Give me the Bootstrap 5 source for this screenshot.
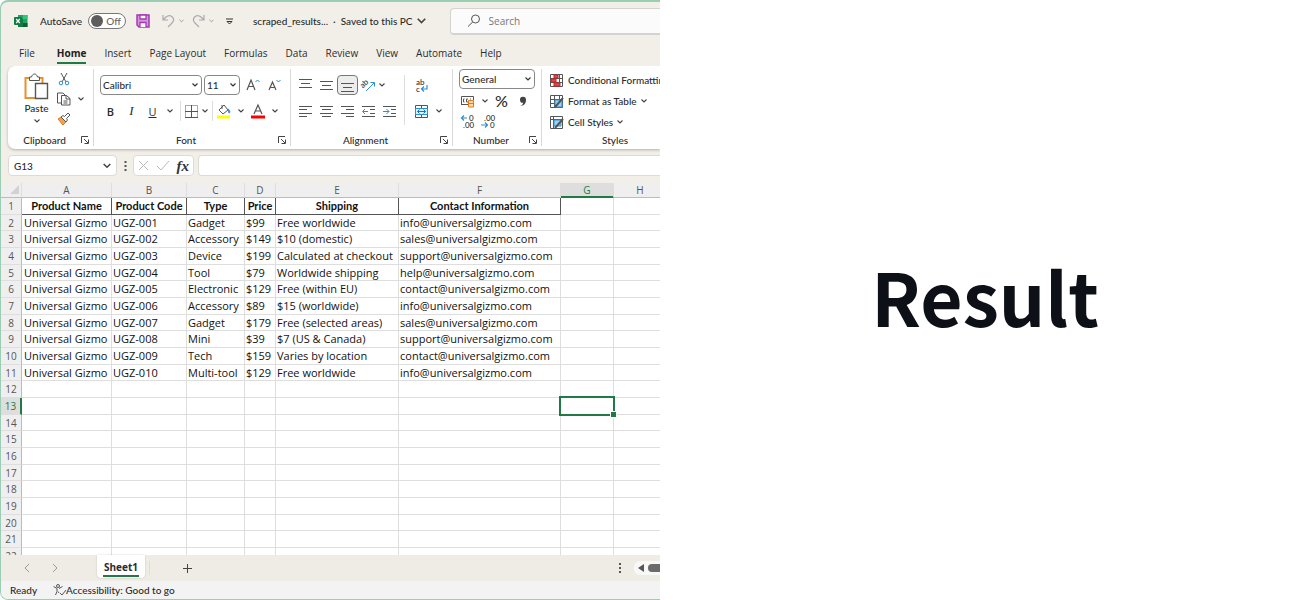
<!DOCTYPE html>
<html lang="en">
<head>
<meta charset="utf-8">
<meta name="viewport" content="width=device-width, initial-scale=1">
<title>scraped_results</title>
<link href="https://cdn.jsdelivr.net/npm/bootstrap@5.3.0/dist/css/bootstrap.min.css" rel="stylesheet">
<script src="https://cdn.jsdelivr.net/npm/bootstrap@5.3.0/dist/js/bootstrap.bundle.min.js"></script>
<style>
:root{--ink:#2b2b2b;--line:#dedede;--green:#1f7a45}
body{background:#fff;color:var(--ink);font:500 10px/16px Lato,"Open Sans",sans-serif}
button,input,select{font:inherit;color:inherit}
button{border:0;background:none;padding:0}
svg{display:block;fill:none;stroke:#555;stroke-width:1;flex:none;overflow:visible}
.icon-defs{position:absolute}
.no-line{stroke:none}
.icon-text{stroke:none;fill:#333;font-size:8px}
.workbook{flex:0 0 50.8%;min-width:0;border:1px solid #9bcdb4;border-width:2px 0 1px 1px;border-radius:8px 0 0 8px;background:#f2efe8;white-space:nowrap}
.workbook>*{flex:none}
.titlebar{height:38px;padding-left:13px}
.autosave{width:38px;height:16px;border:1px solid #777;border-radius:8px;background:#fff;margin:0 10px 0 6px;padding:0 4px 0 2px;color:#666}
.autosave input{appearance:none;width:12px;height:12px;border-radius:50%;background:#5d5d5d;margin:0}
.search-box{flex:1 0 auto;height:27px;margin-left:24px;background:#fbfbfb;border:1px solid #d5d3d0;border-bottom-width:2px;border-right:0;border-radius:4px 0 0 4px;padding-left:16px}
.search-box input{border:0;background:none;outline:0;width:150px;padding:0;font:10px "Open Sans",sans-serif}
.search-box input::placeholder{color:#777;opacity:1}
.menu{height:26px;padding:4px 0 2px 18px;gap:18px;font:500 10px "Open Sans",sans-serif}
.menu a{color:#2d2d2d;text-decoration:none;height:20px;line-height:18px}
.menu a:first-child{margin-right:4px}
.menu a.current{font-weight:700;color:#222;border-bottom:2px solid var(--green)}
.ribbon{height:83px;margin-left:7px;background:#fff;border-radius:7px 0 0 7px;box-shadow:0 1px 3px #0004;padding-top:3px;line-height:14px;overflow:hidden;clip-path:inset(0 0 -6px -4px)}
.ribbon-group{border-right:1px solid #d9d9d9;flex:none;height:77px}
.ribbon-group:last-child{border:0}
.tools{height:64px}
.tools.font-tools{padding-left:6px}
.two-rows{display:flex;flex-direction:column;gap:6px;padding-top:6px}
.group-foot{display:grid;grid-template-columns:1fr 12px;text-align:center;height:14px;align-items:center}
.tool{width:21px;height:20px;display:flex;align-items:center;justify-content:center;flex:none}
.tool.letter{font:600 11px "Open Sans",sans-serif}
.drop{width:13px;height:20px;display:flex;align-items:center;justify-content:center;flex:none}
.drop.slim{width:6px}
.tool.on{border:1px solid #777;border-radius:4px;background:#ededed}
.tool.percent{font-size:16px}
.tool.italic-key{font:italic 13px "Liberation Serif",serif}
.pick{appearance:none;border:1px solid #888;border-radius:4px;height:20px;padding:0 2px;line-height:16px;background:#fff url("data:image/svg+xml,%3Csvg xmlns='http://www.w3.org/2000/svg' width='6' height='4'%3E%3Cpath d='M.5.5 3 3 5.500.5' fill='none' stroke='%23333' stroke-width='1.200'/%3E%3C/svg%3E") right 3px center no-repeat}
.pick-font{width:102px}
.pick-size{width:36px;margin:0 2px}
.pick-number{width:76px;margin:0 0 2px 2px}
.vr-line{width:1px;background:#ddd;height:20px;flex:none}
.vr-line.tall{height:50px;margin:6px 6px 0 4px}
.vr-line.short{height:14px}
.formula{height:34px;padding:6px 0 7px 7px}
.formula .field{height:21px;background:#fff;border:1px solid #dedbd6;border-radius:4px}
.name-box{width:109px;padding:0 5px}
.name-box input{border:0;background:none;width:85px;outline:0;padding:0}
.fx-box{width:61px}
.fx{font:italic 700 15px/18px "Liberation Serif",serif;color:#333}
.workbook>.sheet-area{flex:1 1 0;min-height:0;overflow:hidden;background:#fff}
.sheet{table-layout:fixed;border-collapse:separate;border-spacing:0;width:713px;height:382px;color:#111;font:500 11px/14px "Open Sans",sans-serif}
.sheet .c-num{width:21px}.sheet .c-a{width:90px}.sheet .c-b{width:75px}.sheet .c-c{width:58px}.sheet .c-d{width:31px}.sheet .c-e{width:123px}.sheet .c-f{width:162px}.sheet .c-g{width:53px}.sheet .c-h{width:100px}
.sheet td,.sheet tbody .title-cell,.sheet th{padding:0 1px;border-right:1px solid var(--line);border-bottom:1px solid var(--line)}
.sheet td:nth-child(2){padding-left:2px}
.sheet thead th,.sheet .num{background:#efefef;text-align:center;color:#555;font-size:10px;font-weight:400}
.sheet .num{border-right-color:#bbb;padding:0}
.sheet thead th{border-bottom-color:#bbb}
.sheet thead th:last-child{padding-right:48px}
.sheet tbody .title-cell{font-family:Lato,sans-serif;font-weight:700;text-align:center;border-right-color:#555;border-bottom-color:#555;padding:0}
.sheet thead .active{background:#dedede;color:var(--green);box-shadow:inset 0 -1px var(--green);border-bottom-color:var(--green)}
.sheet .num.active{background:#dedede;color:var(--green);border-right:2px solid var(--green)}
.sheet .selected{position:relative}
.ring{position:absolute;inset:-2px;border:2px solid var(--green)}
.ring::after{content:"";position:absolute;right:-3px;bottom:-3px;width:5px;height:5px;background:var(--green);outline:1px solid #fff}
.tabs{height:26px;background:#efece5;padding-left:22px}
.sheet-tab{height:23px;width:48px;background:#fff;border-radius:0 0 4px 4px;box-shadow:0 0 2px #0003;font:700 10px "Open Sans",sans-serif;align-self:flex-start;margin-left:38px}
.sheet-tab span{border-bottom:2px solid var(--green);display:block;height:20px;line-height:20px;margin:0 6px}
.track{background:#f8f8f8;border-radius:6px 0 0 6px;height:14px;width:26px;padding-left:4px;overflow:hidden}
.thumb{width:30px;height:8px;border-radius:4px;background:#6b6b6b;flex:none}
.status{height:18px;background:#f3f3f3;padding-left:9px}
.headline-side{padding:0 0 10px 10px}
.headline{font:700 73px/1 "Noto Sans CJK SC",sans-serif;color:#0d1117}
</style>
</head>
<body>
<svg class="icon-defs" width="0" height="0" aria-hidden="true">
<symbol id="chev" viewBox="0 0 6 4"><path d="M.5.5 3 3 5.500.5" stroke="#444" stroke-width="1.100"/></symbol>
<symbol id="launch" viewBox="0 0 8 8"><path d="M.5 7V.5H7M3 3l4 4M7.500 3.500v4h-4" stroke="#444"/></symbol>
</svg>
<div class="d-flex vh-100 overflow-hidden">
<main class="workbook d-flex flex-column overflow-hidden">
  <header class="titlebar d-flex align-items-center">
    <svg class="no-line" width="14" height="14" viewBox="0 0 14 14"><path d="M4 1h9.500v12H4z" fill="#21a366"/><path d="M9 1h4.500v4H9z" fill="#33c481"/><path d="M4 5h5v8H4z" fill="#107c41"/><path d="M9 9h4.500v4H9z" fill="#185c37"/><rect y="3" width="8" height="8" rx="1" fill="#107c41"/><path d="m2.200 5 3.600 4M5.800 5 2.200 9" stroke="#fff" stroke-width="1.200"/></svg>
    <label for="autosave" class="ms-2 ps-1">AutoSave</label>
    <div class="autosave d-flex align-items-center justify-content-between"><input type="checkbox" id="autosave"><span>Off</span></div>
    <button aria-label="Save"><svg width="14" height="14" viewBox="0 0 14 14"><path d="M1 1h12v12H3l-2-2z" fill="#d893df" stroke="#a23bb0" stroke-width="1.500"/><path d="M4 1h6v4H4zM4 13V8.500h6V13" fill="#fff" stroke="#a23bb0" stroke-width="1.300"/></svg></button>
    <button aria-label="Undo" class="ms-2 ps-1"><svg width="13" height="14" viewBox="0 0 13 14"><path d="M1 1v5h5M1 6l3-3c5-4 10 2 6 6l-4 4" stroke="#aaa" stroke-width="1.200"/></svg></button>
    <button aria-label="Undo list" class="drop"><svg width="5" height="4" opacity=".5"><use href="#chev"/></svg></button>
    <button aria-label="Redo" class="ms-1"><svg width="13" height="14" viewBox="0 0 13 14"><path d="M12 1v5H7M12 6 9 3C4-1-1 5 3 9l4 4" stroke="#aaa" stroke-width="1.200"/></svg></button>
    <button aria-label="Redo list" class="drop"><svg width="5" height="4" opacity=".5"><use href="#chev"/></svg></button>
    <button aria-label="Customize toolbar" class="ms-2"><svg width="7" height="7" viewBox="0 0 7 7"><path d="M0 1h7M1 3.500 3.500 6 6 3.500z" stroke="#333"/></svg></button>
    <span class="ms-3 ps-1">scraped_results...&nbsp; ·&nbsp; Saved to this PC</span>
    <button aria-label="File details" class="ms-1"><svg width="9" height="6"><use href="#chev"/></svg></button>
    <div class="search-box d-flex align-items-center gap-2"><svg width="14" height="14" viewBox="0 0 14 14"><circle cx="8.500" cy="5" r="4"/><path d="M5.700 8 1 12.500"/></svg><input type="text" placeholder="Search" aria-label="Search"></div>
  </header>
  <nav class="menu d-flex">
    <a href="#">File</a><a href="#" class="current">Home</a><a href="#">Insert</a><a href="#">Page Layout</a><a href="#">Formulas</a><a href="#">Data</a><a href="#">Review</a><a href="#">View</a><a href="#">Automate</a><a href="#">Help</a>
  </nav>
  <section class="ribbon d-flex">
    <div class="ribbon-group" style="width:86px">
      <div class="tools d-flex">
        <button class="d-flex flex-column align-items-center ms-3 pt-1">
          <svg width="25" height="28" viewBox="0 0 25 28"><path d="M6 5H1.500v20H11M14 5h4.500v5" stroke="#e8912d" stroke-width="2"/><path d="M5.500 7.500V4h2c1-4 5-4 6 0h2v3.500z" fill="#fff"/><path d="M11.500 10.500h12v15h-12z" fill="#fff" stroke-width="1.400"/></svg>
          <span>Paste</span><svg width="6" height="4" class="mt-1"><use href="#chev"/></svg>
        </button>
        <div class="d-flex flex-column ms-1">
          <button class="tool" aria-label="Cut"><svg width="12" height="14" viewBox="0 0 12 14"><path d="m3 1 5 9M9 1 4 10"/><circle cx="3" cy="11" r="1.800" stroke="#2b8fd6"/><circle cx="9" cy="11" r="1.800" stroke="#2b8fd6"/></svg></button>
          <div class="d-flex"><button class="tool" aria-label="Copy"><svg width="14" height="14" viewBox="0 0 14 14"><path d="M4 11H.500V1H6l2 2M4.500 3.500h5l3.500 3V13H4.500zM9 3.500V7h4M6.500 9h4M6.500 11h4"/></svg></button><button class="drop" aria-label="Copy options"><svg width="6" height="4"><use href="#chev"/></svg></button></div>
          <button class="tool" aria-label="Format painter"><svg width="14" height="14" viewBox="0 0 14 14"><path d="m1 7 3-2 5 5-3 3z" fill="#f6a14a" stroke="#e37b16"/><path d="m4 5 2-1.500 1.500 1L11 1l2 2-3.500 3.500 1 1.500L9 10z" fill="#fff"/></svg></button>
        </div>
      </div>
      <div class="group-foot"><span>Clipboard</span><button aria-label="Clipboard settings"><svg width="8" height="8"><use href="#launch"/></svg></button></div>
    </div>
    <div class="ribbon-group" style="width:197px">
      <div class="tools font-tools two-rows">
        <div class="d-flex align-items-center">
          <select class="pick pick-font" aria-label="Font"><option>Calibri</option></select>
          <select class="pick pick-size" aria-label="Font size"><option>11</option></select>
          <button class="tool" aria-label="Grow font"><svg width="14" height="14" viewBox="0 0 14 14"><path d="m1 12 4-10 4 10M2.500 8.500h5" stroke-width="1.200"/><path d="m9.500 4 2-2 2 2" stroke="#2b8fd6"/></svg></button>
          <button class="tool" aria-label="Shrink font"><svg width="14" height="14" viewBox="0 0 14 14"><path d="M2 12 5.500 4 9 12M3.200 9.500h4.500" stroke-width="1.200"/><path d="m9.500 2 2 2 2-2" stroke="#2b8fd6"/></svg></button>
        </div>
        <div class="d-flex align-items-center">
          <button class="tool letter">B</button><button class="tool italic-key">I</button><button class="tool letter fw-normal text-decoration-underline">U</button>
          <button class="drop" aria-label="Underline options"><svg width="6" height="4"><use href="#chev"/></svg></button><span class="vr-line ms-1"></span>
          <button class="tool" aria-label="Borders"><svg width="13" height="13" viewBox="0 0 13 13"><path d="M.5.5h12v12H.500z" stroke-dasharray="1 1"/><path d="M0 6.500h13M6.500 0v13M0 12.500h13"/></svg></button>
          <button class="drop slim" aria-label="Border options"><svg width="6" height="4"><use href="#chev"/></svg></button><span class="vr-line ms-1"></span>
          <button class="tool" aria-label="Fill color"><svg width="14" height="15" viewBox="0 0 14 15"><path d="m2 6 5-5 4 5-5 4zM5 1v4"/><path d="M12 9c2 0 0-4-1-4z" fill="#2b8fd6" stroke="#2b8fd6"/><path d="M0 13h13" stroke="#ff0" stroke-width="3"/></svg></button>
          <button class="drop" aria-label="Fill options"><svg width="6" height="4"><use href="#chev"/></svg></button>
          <button class="tool" aria-label="Font color"><svg width="14" height="15" viewBox="0 0 14 15"><path d="M3 10 7 1l4 9M4.500 7h5" stroke-width="1.200"/><path d="M0 13h14" stroke="red" stroke-width="3"/></svg></button>
          <button class="drop" aria-label="Color options"><svg width="6" height="4"><use href="#chev"/></svg></button>
        </div>
      </div>
      <div class="group-foot"><span>Font</span><button aria-label="Font settings"><svg width="8" height="8"><use href="#launch"/></svg></button></div>
    </div>
    <div class="ribbon-group" style="width:162px">
      <div class="tools d-flex ps-1">
        <div class="two-rows">
          <div class="d-flex"><button class="tool" aria-label="Top align"><svg width="13" height="13"><path d="M0 .5h13M2 4.500h9M0 8.500h13"/></svg></button><button class="tool" aria-label="Middle align"><svg width="13" height="13"><path d="M0 2.500h13M2 6.500h9M0 10.500h13"/></svg></button><button class="tool on" aria-label="Bottom align"><svg width="13" height="13"><path d="M0 4.500h13M2 8.500h9M0 12.500h13"/></svg></button>
          <button class="tool" aria-label="Orientation"><svg width="15" height="14" viewBox="0 0 15 14"><text class="icon-text" x="0" y="8" transform="rotate(-45 4 7)">ab</text><path d="m5 13 8-8M9.500 4.500H13.500V8.500" stroke="#2b8fd6"/></svg></button><button class="drop slim" aria-label="Orientation options"><svg width="6" height="4"><use href="#chev"/></svg></button></div>
          <div class="d-flex"><button class="tool" aria-label="Align left"><svg width="13" height="13"><path d="M0 1.500h13M0 4.500h8M0 8.500h13M0 11.500h8"/></svg></button><button class="tool" aria-label="Center"><svg width="13" height="13"><path d="M0 1.500h13M2 4.500h9M0 8.500h13M2 11.500h9"/></svg></button><button class="tool" aria-label="Align right"><svg width="13" height="13"><path d="M0 1.500h13M5 4.500h8M0 8.500h13M5 11.500h8"/></svg></button><button class="tool" aria-label="Decrease indent"><svg width="13" height="13"><path d="M0 1.500h13M8 4.500h5M8 8.500h5M0 11.500h13"/><path d="M6 6.500H1M3 4 .5 6.500 3 9" stroke="#2b8fd6"/></svg></button><button class="tool" aria-label="Increase indent"><svg width="13" height="13"><path d="M0 1.500h13M8 4.500h5M8 8.500h5M0 11.500h13"/><path d="M0 6.500h6M3.500 4 6 6.500 3.500 9" stroke="#2b8fd6"/></svg></button></div>
        </div>
        <span class="vr-line tall"></span>
        <div class="two-rows">
          <button class="tool" aria-label="Wrap text"><svg width="14" height="15" viewBox="0 0 14 15"><text class="icon-text" x="1" y="7">ab</text><text class="icon-text" x="1" y="14">c</text><path d="M12 7v4H6.500M9 8.500 6.500 11 9 13.500" stroke="#2b8fd6" stroke-width="1.200"/></svg></button>
          <div class="d-flex"><button class="tool" aria-label="Merge"><svg width="13" height="13"><path d="M.5.5h12v12H.500zM6.500 0v13" /><path d="M.5 3.500h12v6H.500z" fill="#dff0fc" stroke="#2b8fd6"/><path d="M2.500 6.500h8M4.500 4.500l-2 2 2 2M8.500 4.500l2 2-2 2" stroke="#1677c0"/></svg></button><button class="drop" aria-label="Merge options"><svg width="6" height="4"><use href="#chev"/></svg></button></div>
        </div>
      </div>
      <div class="group-foot"><span>Alignment</span><button aria-label="Alignment settings"><svg width="8" height="8"><use href="#launch"/></svg></button></div>
    </div>
    <div class="ribbon-group" style="width:89px">
      <div class="tools ps-1">
        <select class="pick pick-number d-block" aria-label="Number format"><option>General</option></select>
        <div class="d-flex"><button class="tool" aria-label="Accounting format"><svg width="14" height="13" viewBox="0 0 14 13"><path d="M.5 9V1.500h12V5M0 9.500h7M3.500 4H2.500v3h1M7 4H5.500v3H7M10 4H9"/><path d="M7.500 5.500h5v6.500h-5zM7.500 8.500h5" fill="#fbd9ad" stroke="#e37b16"/></svg></button><button class="drop" aria-label="Accounting options"><svg width="6" height="4"><use href="#chev"/></svg></button><button class="tool percent">%</button><button class="tool" aria-label="Comma style"><svg width="9" height="11" viewBox="0 0 9 11"><path d="M2 10c2-.5 3-1.800 3.200-3.200a3 3 0 1 1 2.800-3C8 7.500 6 10 2 10z" fill="#444" stroke="none"/></svg></button></div>
        <div class="d-flex"><button class="tool" aria-label="Increase decimal"><svg width="15" height="15" viewBox="0 0 15 15"><path d="M7 4H1.500M4 1.500 1.500 4 4 6.500" stroke="#2b8fd6" stroke-width="1.200"/><text class="icon-text" x="9" y="7">0</text><text class="icon-text" x="3" y="14">.00</text></svg></button><button class="tool" aria-label="Decrease decimal"><svg width="15" height="15" viewBox="0 0 15 15"><path d="M0 11h6.500M4 8.500 6.500 11 4 13.500" stroke="#2b8fd6" stroke-width="1.200"/><text class="icon-text" x="3" y="7">.00</text><text class="icon-text" x="9" y="14">0</text></svg></button></div>
      </div>
      <div class="group-foot"><span>Number</span><button aria-label="Number settings"><svg width="8" height="8"><use href="#launch"/></svg></button></div>
    </div>
    <div class="ribbon-group ps-2" style="width:150px">
      <div class="tools d-flex flex-column justify-content-between pb-1 pt-1">
        <button class="d-flex align-items-center gap-1"><svg width="14" height="13"><path d="M.5.5h12v12H.500zM0 4.500h13M0 8.500h13M4.500 0v13M9.500 0v13"/><path d="M4 1h4v3H4zM1 5h5v3H1zM4 9h6v3H4z" fill="#e84850" stroke="#c8202a"/></svg>Conditional Formatting</button>
        <button class="d-flex align-items-center gap-1"><svg width="14" height="13"><path d="M.5.5h12v12H.500zM0 4.500h13M0 8.500h13M4.500 0v13M9.500 0v13"/><path d="M5 5h7v7H5z" fill="#9fd0f5" stroke="#2b8fd6"/><path d="m5 12 8-9" stroke-width="2"/></svg><span>Format as Table</span><svg width="6" height="4"><use href="#chev"/></svg></button>
        <button class="d-flex align-items-center gap-1"><svg width="14" height="13"><path d="M.5.5h12v12H.500zM0 3.500h13M3.500 0v13"/><path d="M4 4h7v6H4z" fill="#9fd0f5" stroke="#2b8fd6"/><path d="m5 12 8-9" stroke-width="2"/></svg><span>Cell Styles</span><svg width="6" height="4"><use href="#chev"/></svg></button>
      </div>
      <div class="group-foot"><span>Styles</span></div>
    </div>
  </section>
  <section class="formula d-flex align-items-center">
    <div class="field name-box d-flex align-items-center justify-content-between"><input type="text" value="G13" aria-label="Name box"><svg width="8" height="6"><use href="#chev"/></svg></div>
    <svg width="16" height="12" viewBox="0 0 16 12"><path d="M8.500 1v2M8.500 5v2M8.500 9v2" stroke-width="2"/></svg>
    <div class="field fx-box d-flex align-items-center justify-content-between px-1"><svg width="11" height="11"><path d="m1 1 9 9M10 1l-9 9" stroke="#bbb"/></svg><svg width="13" height="11"><path d="m1 6 4 4 8-9" stroke="#bbb"/></svg><button class="fx" aria-label="Insert function">fx</button></div>
    <input type="text" class="field flex-grow-1 border-end-0 rounded-end-0 ms-1" aria-label="Formula bar">
  </section>
  <section class="sheet-area">
    <table class="sheet" id="sheet">
      <colgroup><col class="c-num"><col class="c-a"><col class="c-b"><col class="c-c"><col class="c-d"><col class="c-e"><col class="c-f"><col class="c-g"><col class="c-h"></colgroup>
      <thead><tr><th><svg width="11" height="10" class="ms-auto no-line"><path d="M10 0v9H1z" fill="#d2d2d2"/></svg></th><th>A</th><th>B</th><th>C</th><th>D</th><th>E</th><th>F</th><th class="active">G</th><th>H</th></tr></thead>
      <tbody></tbody>
    </table>
  </section>
  <section class="tabs d-flex align-items-center">
    <button aria-label="Previous sheet"><svg width="8" height="10"><path d="M6 1 2 5l4 4" stroke="#999"/></svg></button>
    <button aria-label="Next sheet" class="ms-3 ps-1"><svg width="8" height="10"><path d="m2 1 4 4-4 4" stroke="#999"/></svg></button>
    <button class="sheet-tab"><span>Sheet1</span></button><span class="vr-line short ms-1"></span>
    <button aria-label="New sheet" class="ms-4 ps-2"><svg width="11" height="11"><path d="M5.500 1v9M1 5.500h9" stroke="#444"/></svg></button>
    <svg width="12" height="12" viewBox="0 0 12 12" class="ms-auto me-2"><path d="M6 1v2M6 5v2M6 9v2" stroke-width="2"/></svg>
    <div class="track d-flex align-items-center gap-1"><svg class="no-line" width="6" height="8"><path d="M6 0v8L0 4z" fill="#555"/></svg><span class="thumb"></span></div>
  </section>
  <footer class="status d-flex align-items-center">
    <span>Ready</span>
    <svg width="13" height="12" viewBox="0 0 13 12" class="ms-3"><circle cx="5" cy="2" r="1.500"/><path d="M.5 2.500 4 4.500v3L2.500 11M5 7.500 6 9M9.500 2.500 6 4.500M7 9l2 2 4-5"/></svg>
    <span>Accessibility: Good to go</span>
  </footer>
</main>
<aside class="headline-side flex-grow-1 d-flex align-items-center justify-content-center"><h1 class="headline m-0">Result</h1></aside>
</div>
<script>
const rows=[["Product Name","Product Code","Type","Price","Shipping","Contact Information"],
["UGZ-001","Gadget","$99","Free worldwide","info"],["UGZ-002","Accessory","$149","$10 (domestic)","sales"],
["UGZ-003","Device","$199","Calculated at checkout","support"],["UGZ-004","Tool","$79","Worldwide shipping","help"],
["UGZ-005","Electronic","$129","Free (within EU)","contact"],["UGZ-006","Accessory","$89","$15 (worldwide)","info"],
["UGZ-007","Gadget","$179","Free (selected areas)","sales"],["UGZ-008","Mini","$39","$7 (US & Canada)","support"],
["UGZ-009","Tech","$159","Varies by location","contact"],["UGZ-010","Multi-tool","$129","Free worldwide","info"]];
const body=document.querySelector("#sheet tbody");
for(let r=1;r<=22;r++){
  const tr=body.insertRow();
  const num=document.createElement("th");
  num.className="num"+(r===13?" active":"");num.textContent=r;tr.append(num);
  let values=rows[r-1]||[];
  if(r>1&&values.length)values=["Universal Gizmo",...values.slice(0,4),values[4]+"@universalgizmo.com"];
  for(let c=0;c<8;c++){
    const cell=document.createElement(r===1&&c<6?"th":"td");
    if(r===1&&c<6)cell.className="title-cell";
    cell.textContent=values[c]||"";
    if(r===13&&c===6){cell.className="selected";cell.innerHTML='<div class="ring"></div>'}
    tr.append(cell);
  }
}
</script>
</body>
</html>
